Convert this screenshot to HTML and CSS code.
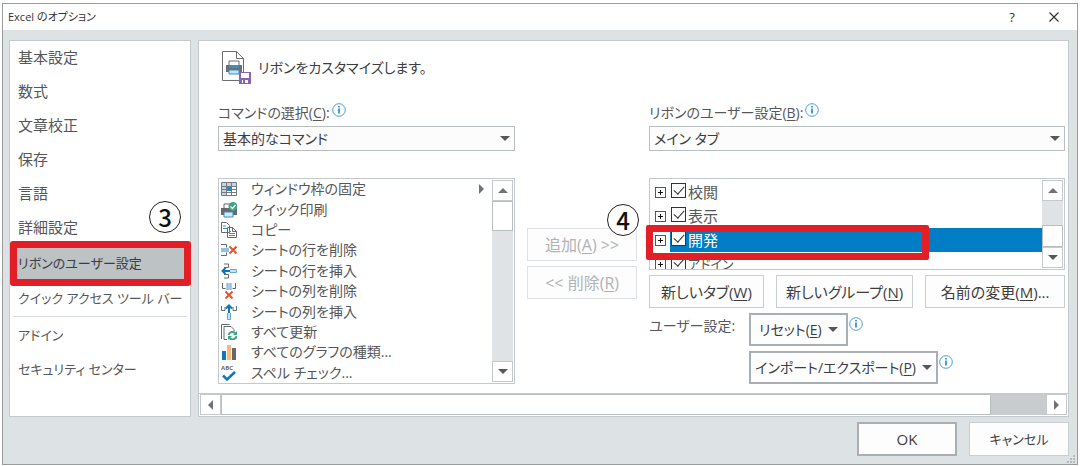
FILE: index.html
```html
<!DOCTYPE html>
<html lang="ja">

<head>
    <meta charset="UTF-8">
    <meta name="viewport" content="width=device-width, initial-scale=1.0">
    <title>Excel のオプション</title>
    <link rel="stylesheet" href="styles.css">
</head>

<body>
    <div class="window">
        <header class="titlebar">
            <h1>Excel のオプション</h1>
            <button type="button" class="title-btn" aria-label="ヘルプ">?</button>
            <button type="button" class="title-btn" aria-label="閉じる">
                <svg width="10" height="10" viewBox="0 0 10 10"><path d="M.5 .5l9 9M9.5 .5l-9 9" stroke="#333" stroke-width="1.2"/></svg>
            </button>
        </header>

        <div class="content">
            <nav class="sidebar">
                <a href="#">基本設定</a>
                <a href="#">数式</a>
                <a href="#">文章校正</a>
                <a href="#">保存</a>
                <a href="#">言語</a>
                <a href="#">詳細設定</a>
                <a href="#" class="kana active">リボンのユーザー設定<span class="step step3">3</span></a>
                <a href="#" class="kana">クイック アクセス ツール バー</a>
                <hr>
                <a href="#" class="kana">アドイン</a>
                <a href="#" class="kana">セキュリティ センター</a>
            </nav>

            <main class="panel">
                <div class="panel-header">
                    <svg width="31" height="34" viewBox="0 0 31 34" fill="none">
                        <path d="M1.5 .5h14l7 7v21M22.500 20V7.500h-7v-7M1.500 .5v29h17" stroke="#6b6f72"/>
                        <path d="M8 10h10v5H8z" fill="#fff" stroke="#6b6f72"/>
                        <path d="M5 14h16v7H5z" fill="#6b6f72"/>
                        <path d="M8 14h10v3H8z" fill="#3b8fc4"/>
                        <path d="M8 19h10v4H8z" fill="#c5e3f5" stroke="#3b8fc4"/>
                        <path d="M18 21h12v12H18z" fill="#8b62ad"/>
                        <path d="M20 22h8v5h-8zM21 29h6v3h-6z" fill="#fff"/>
                        <path d="M22 29h2v3h-2z" fill="#8b62ad"/>
                    </svg>
                    <h2>リボンをカスタマイズします。</h2>
                </div>

                <div class="columns">
                    <div class="chooser">
                        <div class="label-row">
                            <label for="commands">コマンドの選択(<u>C</u>):</label>
                            <svg class="info" viewBox="0 0 14 14"><circle cx="7" cy="7" r="6.300"/><path d="M7 5.500v5M7 3v1.500"/></svg>
                        </div>
                        <div class="select">
                            <select id="commands"><option>基本的なコマンド</option></select>
                        </div>
                    </div>
                    <div class="chooser chooser-right">
                        <div class="label-row">
                            <label for="tabs">リボンのユーザー設定(<u>B</u>):</label>
                            <svg class="info" viewBox="0 0 14 14"><circle cx="7" cy="7" r="6.300"/><path d="M7 5.500v5M7 3v1.500"/></svg>
                        </div>
                        <div class="select">
                            <select id="tabs"><option>メイン タブ</option></select>
                        </div>
                    </div>

                    <div class="listbox">
                        <ul class="commands">
                            <li>
                                <svg viewBox="0 0 16 16"><path d="M.5 1.500h15v13H.5z" fill="#fff" stroke="#77797c"/><path d="M1 2h14v3H1zM1 5h4v9H1z" fill="#b8d8ea"/><path d="M1 5.500h14M1 8.500h14M1 11.500h14M5.500 2v12M10.500 2v12" stroke="#77797c"/><path d="M6 6h5v4H6z" fill="#2b87bf"/></svg>
                                ウィンドウ枠の固定<span class="tri right"></span>
                            </li>
                            <li>
                                <svg viewBox="0 0 16 16"><path d="M3 6V2h6" fill="none" stroke="#66696c"/><path d="M0 6h16v7H0z" fill="#66696c"/><path d="M3 10h9v5H3z" fill="#d5eaf6" stroke="#3b8fc4"/><circle cx="12" cy="4.500" r="4.500" fill="#3fa486"/><path d="M9.500 4.500l2 2 3-3.500" fill="none" stroke="#fff" stroke-width="1.300"/></svg>
                                クイック印刷
                            </li>
                            <li>
                                <svg viewBox="0 0 16 16" fill="#fff" stroke="#66696c"><path d="M.5 .5h5l3 3v7h-8zM6.500 5.500h5l4 4v6h-9z"/><path d="M11.500 5.500v4h4" fill="none"/><path d="M2 4h3M2 6.500h4M8 9.500h2M8 11.500h6M8 13.500h6" stroke="#3b8fc4"/></svg>
                                コピー
                            </li>
                            <li>
                                <svg viewBox="0 0 16 16" fill="none"><path d="M0 2.500h5.500v3M0 13.500h5.500v-3" stroke="#66696c"/><path d="M0 6h8v4H0z" fill="#8fc3e3"/><path d="M8.500 4.500l7 7M15.500 4.500l-7 7" stroke="#e8532b" stroke-width="2"/></svg>
                                シートの行を削除
                            </li>
                            <li>
                                <svg viewBox="0 0 16 16" fill="none"><path d="M3 1h4.500v3.500H3M3 15h4.500v-3.500H3" stroke="#66696c"/><path d="M9 6.500h6.500v3H9" stroke="#66a9d0" fill="#c5e3f5"/><path d="M9 8H1.500M4.500 5L1.500 8l3 3" stroke="#0a78bd" stroke-width="2"/></svg>
                                シートの行を挿入
                            </li>
                            <li>
                                <svg viewBox="0 0 16 16" fill="none"><path d="M1.500 0v5.500h3M14.500 0v5.500h-3" stroke="#66696c"/><path d="M6 0h4v7H6z" fill="#a9d0e8"/><path d="M6 0v7M10 0v7" stroke="#66a9d0"/><path d="M4.500 8.500l7 7M11.500 8.500l-7 7" stroke="#e8532b" stroke-width="2"/></svg>
                                シートの列を削除
                            </li>
                            <li>
                                <svg viewBox="0 0 16 16" fill="none"><path d="M.5 2v4.500H4V3M15.500 2v4.500H12V3" stroke="#66696c"/><path d="M6.500 9v6.500h3V9" stroke="#66a9d0" fill="#c5e3f5"/><path d="M8 9V1.500M5 4.500l3-3 3 3" stroke="#0a78bd" stroke-width="2"/></svg>
                                シートの列を挿入
                            </li>
                            <li>
                                <svg viewBox="0 0 16 16" fill="none"><path d="M.5 15V.5h8M3 15.500V2.500h7l3 3v2" stroke="#66696c"/><path d="M3 15.500h3" stroke="#66696c"/><path d="M7.500 11a4 4 0 0 1 7-1.500M15.500 12a4 4 0 0 1-7 2" stroke="#3fa486" stroke-width="2"/><path d="M16 7v4h-4zM7 16v-4h4z" fill="#3fa486"/></svg>
                                すべて更新
                            </li>
                            <li>
                                <svg viewBox="0 0 16 16"><path d="M1 7h4v9H1z" fill="#0a78bd"/><path d="M6 1h4v15H6z" fill="#f8b878"/><path d="M11 4h4v12h-4z" fill="#66696c"/></svg>
                                すべてのグラフの種類...
                            </li>
                            <li>
                                <svg viewBox="0 0 16 16"><text x="0" y="5" class="abc">ABC</text><path d="M2 10.500l4 4 8-7.500" fill="none" stroke="#0a78bd" stroke-width="2.500"/></svg>
                                スペル チェック...
                            </li>
                        </ul>
                        <div class="scrollbar">
                            <button type="button" aria-label="上へ"><span class="tri up"></span></button>
                            <div class="thumb"></div>
                            <div class="track"></div>
                            <button type="button" aria-label="下へ"><span class="tri down"></span></button>
                        </div>
                    </div>

                    <div class="transfer">
                        <button type="button" class="btn" disabled>追加(<u>A</u>) &gt;&gt;</button>
                        <button type="button" class="btn" disabled>&lt;&lt; 削除(<u>R</u>)</button>
                    </div>

                    <div class="custom">
                        <div class="tree-wrap">
                            <div class="listbox">
                                <ul class="tree">
                                    <li><button type="button" class="expander" aria-label="展開"></button><input type="checkbox" id="review" checked><label for="review">校閲</label></li>
                                    <li><button type="button" class="expander" aria-label="展開"></button><input type="checkbox" id="view" checked><label for="view">表示</label></li>
                                    <li class="selected"><button type="button" class="expander" aria-label="展開"></button><input type="checkbox" id="dev" checked><label for="dev">開発</label></li>
                                    <li><button type="button" class="expander" aria-label="展開"></button><input type="checkbox" id="addin" checked><label for="addin" class="kana">アドイン</label></li>
                                </ul>
                                <div class="scrollbar">
                                    <button type="button" aria-label="上へ"><span class="tri up"></span></button>
                                    <div class="track"></div>
                                    <div class="thumb"></div>
                                    <button type="button" aria-label="下へ"><span class="tri down"></span></button>
                                </div>
                            </div>
                            <div class="highlight"><span class="step step4">4</span></div>
                        </div>
                        <div class="tab-buttons">
                            <button type="button" class="btn">新しいタブ(<u>W</u>)</button>
                            <button type="button" class="btn">新しいグループ(<u>N</u>)</button>
                            <button type="button" class="btn">名前の変更(<u>M</u>)...</button>
                        </div>
                        <div class="settings">
                            <span class="settings-label">ユーザー設定:</span>
                            <div class="settings-row">
                                <button type="button" class="btn strong">リセット(<u>E</u>)<span class="tri down"></span></button>
                                <svg class="info" viewBox="0 0 14 14"><circle cx="7" cy="7" r="6.300"/><path d="M7 5.500v5M7 3v1.500"/></svg>
                            </div>
                            <div class="settings-row second">
                                <button type="button" class="btn strong">インポート/エクスポート(<u>P</u>)<span class="tri down"></span></button>
                                <svg class="info" viewBox="0 0 14 14"><circle cx="7" cy="7" r="6.300"/><path d="M7 5.500v5M7 3v1.500"/></svg>
                            </div>
                        </div>
                    </div>
                </div>

                <div class="hscroll">
                    <button type="button" aria-label="左へ"><span class="tri left"></span></button>
                    <div class="thumb"></div>
                    <div class="track"></div>
                    <button type="button" aria-label="右へ"><span class="tri right"></span></button>
                </div>
            </main>
        </div>

        <footer class="footer">
            <button type="button" class="btn strong">OK</button>
            <button type="button" class="btn kana">キャンセル</button>
            <svg class="grip" width="8" height="8" viewBox="0 0 8 8"><path d="M6 0h2v2H6zM3 3h2v2H3zM6 3h2v2H6zM0 6h2v2H0zM3 6h2v2H3zM6 6h2v2H6z" fill="#b4babd"/></svg>
        </footer>
    </div>
</body>

</html>
```

FILE: styles.css
```css
* {
    box-sizing: border-box;
}

body {
    margin: 0;
    padding: 3px 2px 1px;
    background-color: #ffffff;
    color: #555759;
    font-family: "Open Sans", "Noto Sans CJK JP", sans-serif;
    font-feature-settings: "palt";
    font-size: 15px;
    line-height: 20px;
}

button,
select {
    font: inherit;
    font-feature-settings: inherit;
    color: inherit;
}

button {
    padding: 0;
    white-space: nowrap;
}

h1, h2, ul {
    margin: 0;
    padding: 0;
    font-weight: normal;
    list-style: none;
}

u {
    text-underline-offset: 2px;
}

/* Katakana labels are set smaller than the kanji ones */
.kana {
    font-size: 13px;
}

.window {
    border: 1px solid #989da0;
    background-color: #dde2e5;
}

/* Title bar */
.titlebar {
    display: flex;
    align-items: center;
    height: 26px;
    padding: 0 17px 0 5px;
    background-color: #ffffff;
}

.titlebar h1 {
    flex: 1;
    font-size: 11px;
    color: #333333;
}

.title-btn {
    width: 12px;
    margin-left: 30px;
    border: none;
    background: none;
    color: #333333;
    font-size: 13px;
}

.title-btn svg {
    display: block;
    margin: 0 auto;
}

.content {
    display: flex;
    gap: 7px;
    padding: 10px 8px 5px 6px;
}

/* Category list */
.sidebar {
    display: flex;
    flex-direction: column;
    width: 182px;
    flex-shrink: 0;
    background-color: #ffffff;
    border: 1px solid #c3c9cc;
}

.sidebar a {
    padding: 6px 0 8px 8px;
    color: inherit;
    text-decoration: none;
    white-space: nowrap;
}

.sidebar a.active {
    position: relative;
    padding: 8px 0 9px 8px;
    background-color: #bdc2c5;
    color: #3b3d3f;
}

.sidebar a.active::after {
    content: "";
    position: absolute;
    inset: -4px -1px -4px 0;
    border: 7px solid #e21f26;
    border-radius: 3px;
}

.sidebar hr {
    width: 174px;
    margin: 0 auto 2px;
    border: none;
    border-top: 1px solid #d5dadc;
}

/* Numbered callouts */
.step {
    position: absolute;
    width: 32px;
    height: 32px;
    border: 1px solid #222222;
    border-radius: 50%;
    background-color: #ffffff;
    color: #111111;
    font-family: "Noto Sans CJK JP", sans-serif;
    font-size: 24px;
    font-weight: 500;
    line-height: 30px;
    text-align: center;
}

.step3 {
    top: -44px;
    right: 9px;
}

.step4 {
    top: -28px;
    left: -46px;
}

/* Main panel */
.panel {
    flex: 1;
    min-width: 0;
    background-color: #ffffff;
    border: 1px solid #c3c9cc;
}

.panel-header {
    display: flex;
    align-items: center;
    gap: 6px;
    padding: 10px 22px 16px;
    color: #3b3d3f;
}

.panel-header h2 {
    font-size: 14px;
}

.columns {
    display: grid;
    grid-template-columns: 5fr 110px 7fr;
    column-gap: 12px;
    row-gap: 27px;
    padding: 0 3px 9px 19px;
    font-size: 14px;
}

.chooser-right {
    grid-column: 3;
}

.label-row {
    display: flex;
    gap: 2px;
    padding: 2px 0 3px;
}

.info {
    width: 14px;
    height: 14px;
    fill: #ffffff;
    stroke: #4a9fd0;
    stroke-width: 1;
}

.info path {
    stroke-width: 2;
}

.select {
    position: relative;
}

.select select {
    display: block;
    width: 100%;
    height: 25px;
    padding: 0 4px;
    border: 1px solid #b9bec1;
    border-radius: 0;
    background-color: #fcfcfc;
    color: #3b3d3f;
    appearance: none;
}

.select::after {
    content: "";
    position: absolute;
    top: 10px;
    right: 5px;
    border: 5px solid transparent;
    border-top-color: #54585b;
    border-bottom: none;
}

.tri {
    display: inline-block;
    border: 5px solid transparent;
}

.tri.up {
    border-top: none;
    border-bottom-color: #6e7376;
}

.tri.down {
    border-bottom: none;
    border-top-color: #54585b;
}

.tri.left {
    border-left: none;
    border-right-color: #6e7376;
}

.tri.right {
    border-right: none;
    border-left-color: #6e7376;
}

/* Lists */
.listbox {
    display: flex;
    border: 1px solid #c3c9cc;
    background-color: #ffffff;
}

.commands {
    flex: 1;
    display: flex;
    flex-direction: column;
}

.commands li {
    flex: 1;
    display: flex;
    align-items: center;
    padding: 0 8px 0 2px;
    white-space: nowrap;
}

.commands svg {
    width: 16px;
    height: 16px;
    margin-right: 14px;
}

.commands .tri {
    margin-left: auto;
}

.abc {
    font-family: "Open Sans", sans-serif;
    font-size: 6px;
    font-weight: bold;
    fill: #66696c;
}

.scrollbar {
    display: flex;
    flex-direction: column;
    width: 22px;
    padding: 1px 1px 1px 0;
}

.scrollbar button,
.hscroll button {
    display: flex;
    align-items: center;
    justify-content: center;
    flex-shrink: 0;
    border: 1px solid #c3c9cc;
    background-color: #ffffff;
}

.scrollbar button {
    height: 21px;
}

.scrollbar .thumb {
    height: 30px;
    border: 1px solid #b9bec1;
    background-color: #ffffff;
}

.scrollbar .track {
    flex: 1;
    background-color: #dfe3e5;
}

/* Buttons */
.btn {
    height: 33px;
    border: 1px solid #c9ced1;
    background-color: #fdfdfd;
    color: #3b3d3f;
}

.btn:disabled {
    border-color: #dfe2e4;
    color: #b0b3b5;
}

.btn.strong {
    border: 2px solid #a9afb3;
}

.transfer {
    display: flex;
    flex-direction: column;
    gap: 5px;
    padding-top: 50px;
    font-size: 16px;
}

/* Ribbon tabs */
.custom {
    display: flex;
    flex-direction: column;
    gap: 5px;
}

.tree-wrap {
    position: relative;
}

.tree-wrap .listbox {
    height: 92px;
}

.tree {
    flex: 1;
    padding-top: 1px;
    overflow: hidden;
    font-size: 15px;
}

.tree li {
    display: flex;
    align-items: center;
    height: 24px;
    padding-left: 5px;
}

.tree li.selected {
    background: linear-gradient(to right, #ffffff 20px, #007dc5 20px);
    color: #ffffff;
}

.tree-wrap .thumb {
    height: 22px;
}

.expander {
    position: relative;
    width: 11px;
    height: 11px;
    border: 1px solid #55585a;
    background: linear-gradient(#111111, #111111) center / 5px 1px no-repeat, linear-gradient(#111111, #111111) center / 1px 5px no-repeat, #ffffff;
}

.tree input {
    appearance: none;
    display: flex;
    justify-content: center;
    width: 15px;
    height: 15px;
    margin: 0 2px 3px 5px;
    border: 1px solid #333333;
    background-color: #ffffff;
}

.tree input:checked::before {
    content: "";
    width: 5px;
    height: 9px;
    border: solid #333333;
    border-width: 0 1px 1px 0;
    transform: rotate(42deg);
}

.highlight {
    position: absolute;
    top: 47px;
    left: -3px;
    width: 68%;
    height: 35px;
    border: 7px solid #e21f26;
    border-radius: 2px;
    pointer-events: none;
}

.tab-buttons {
    display: grid;
    grid-template-columns: 115fr 138fr 140fr;
    gap: 12px;
    font-size: 15px;
}

.settings {
    display: grid;
    grid-template-columns: 100px 1fr;
    row-gap: 5px;
}

.settings-label {
    padding-top: 3px;
}

.settings-row {
    display: flex;
    gap: 1px;
}

.settings-row .btn {
    padding: 0 4px;
}

.settings-row:not(.second) .btn {
    padding: 0 8px;
}

.settings-row .tri {
    margin: 0 0 3px 6px;
}

.settings-row .info {
    margin-top: 4px;
}

.settings-row.second {
    grid-column: 2;
}

.hscroll {
    display: flex;
    height: 23px;
    padding: 0 1px 1px;
    border-top: 1px solid #c3c9cc;
}

.hscroll button {
    width: 21px;
}

.hscroll .thumb {
    flex: 14;
    border: 1px solid #b9bec1;
}

.hscroll .track {
    flex: 1;
    background-color: #c8cccf;
}

/* Footer */
.footer {
    position: relative;
    display: flex;
    justify-content: flex-end;
    gap: 12px;
    padding: 0 8px 8px;
}

.footer .btn {
    width: 100px;
    height: 34px;
}

.grip {
    position: absolute;
    right: 2px;
    bottom: 1px;
}
```
